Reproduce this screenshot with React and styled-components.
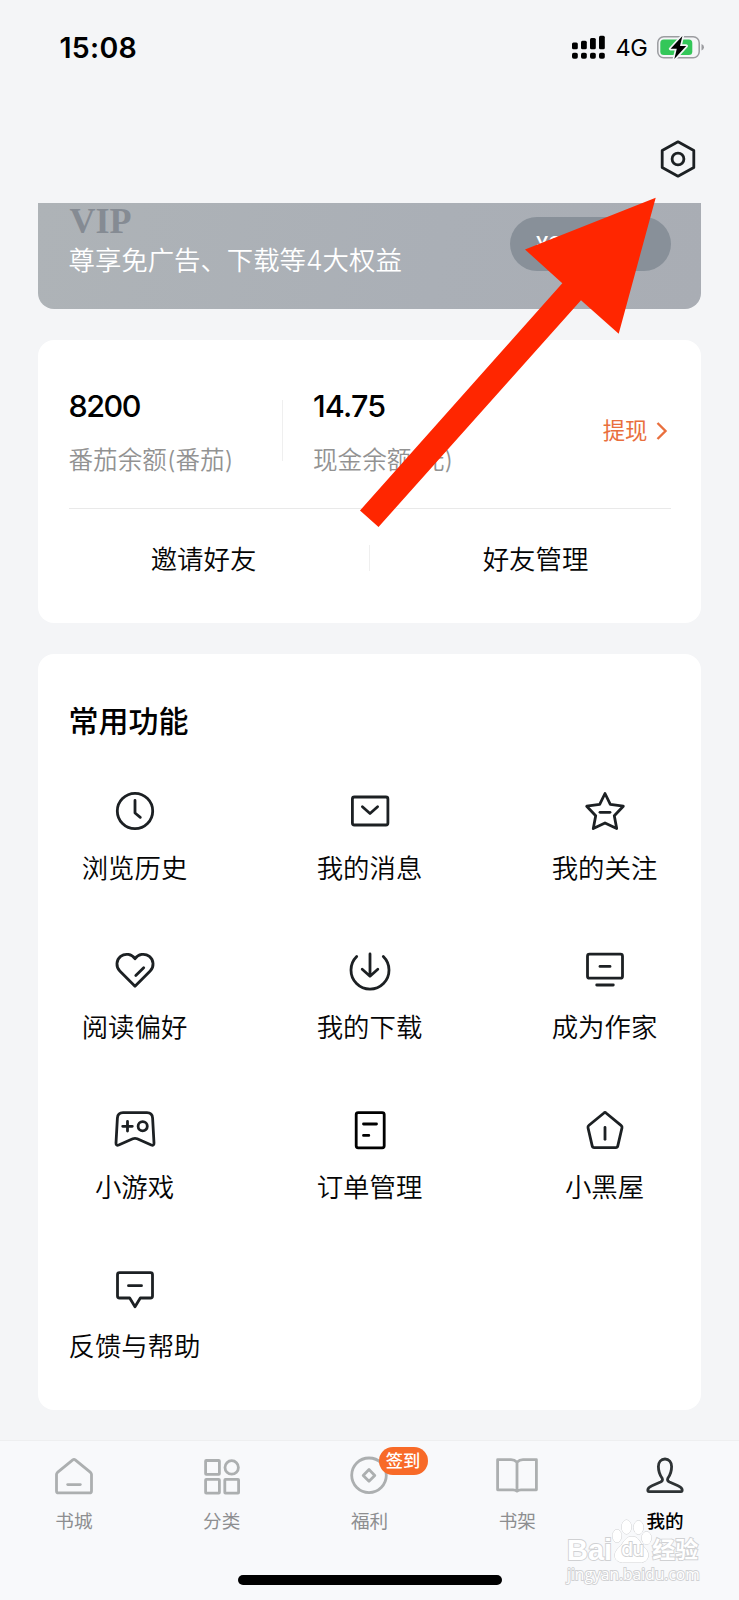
import React from 'react';
import styled, { createGlobalStyle } from 'styled-components';

const GlobalStyle = createGlobalStyle`
  * {
    box-sizing: border-box;
  }

  body {
    margin: 0;
    background: #f4f5f7;
    font-family: Inter, "Noto Sans CJK SC", sans-serif;
  }
`;

const Page = styled.div`
  position: relative;
  display: flex;
  flex-direction: column;
  width: 739px;
  height: 1600px;
  overflow: hidden;
  background: #f4f5f7;
  color: #050505;
`;

const StatusBar = styled.div`
  display: flex;
  align-items: center;
  justify-content: space-between;
  height: 95px;
  padding: 0 35px 0 59.5px;
`;

const Time = styled.span`
  font-size: 28.5px;
  font-weight: 600;
  letter-spacing: 0.3px;
  color: #000;
`;

const StatusIcons = styled.div`
  display: flex;
  align-items: center;
  gap: 9.5px;
`;

const Network = styled.span`
  font-size: 23.5px;
  letter-spacing: -0.3px;
  color: #000;
`;

const Header = styled.div`
  display: flex;
  align-items: center;
  justify-content: flex-end;
  height: 108px;
  padding: 20px 37px 0 0;
`;

const Icon = styled.svg`
  display: block;
  width: 48px;
  height: 48px;
  flex-shrink: 0;
  fill: none;
  stroke: ${props => props.$color || '#1c2023'};
  stroke-width: 2.8;
  stroke-linecap: round;
  stroke-linejoin: round;
`;

const Content = styled.div`
  display: flex;
  flex-direction: column;
  flex: 1;
  padding: 0 38px;
`;

const VipCard = styled.div`
  display: flex;
  justify-content: space-between;
  height: 106px;
  padding: 0 30px 0 30.5px;
  border-radius: 0 0 16px 16px;
  background: linear-gradient(100deg, #aeb3b7, #aaafb6 60%, #a9adb4);
`;

const VipName = styled.div`
  height: 37px;
  padding: 2px 0 0 1px;
  font-family: "Liberation Serif", serif;
  font-size: 36px;
  font-weight: bold;
  line-height: 33px;
  letter-spacing: 0;
  color: #858b93;
`;

const VipText = styled.div`
  font-size: 26.4px;
  font-weight: 350;
  line-height: 40px;
  color: #fff;
`;

const VipButton = styled.div`
  width: 161px;
  height: 54px;
  margin-top: 13.5px;
  padding-left: 26px;
  border-radius: 27px;
  background: #889099;
  color: #fff;
  font-size: 22px;
  font-weight: 500;
  line-height: 54px;
`;

const Card = styled.div`
  display: flex;
  flex-direction: column;
  height: ${props => props.$height}px;
  margin-top: 31px;
  padding: 0 30.5px;
  border-radius: 16px;
  background: #fff;
`;

const Balances = styled.div`
  display: flex;
  align-items: center;
  height: 169px;
  padding-top: 14px;
  border-bottom: 1px solid #e9e9e9;
`;

const Balance = styled.div`
  width: 213.5px;
  padding-top: 2px;
`;

const Amount = styled.div`
  height: 38px;
  font-size: 30.5px;
  font-weight: 500;
  line-height: 38px;
  letter-spacing: ${props => props.$spacing}px;
  color: #000;
`;

const Caption = styled.div`
  margin-top: 17px;
  font-size: 24.6px;
  font-weight: 350;
  line-height: 36px;
  color: #929292;
  white-space: nowrap;
`;

const Separator = styled.div`
  width: 1px;
  height: ${props => props.$height}px;
  margin: 0 ${props => props.$gap || 0}px 2px 0;
  background: #efefef;
`;

const Withdraw = styled.div`
  display: flex;
  align-items: center;
  gap: 8px;
  margin-left: auto;
  padding-right: 3px;
  color: #e96f3d;
  font-size: 22.4px;
  line-height: 30px;
`;

const Friends = styled.div`
  display: flex;
  align-items: center;
  height: 99px;
  margin: 0 -30.5px;
`;

const FriendLink = styled.div`
  flex: 1;
  text-align: center;
  font-size: 26.4px;
  font-weight: 350;
  line-height: 40px;
`;

const Title = styled.div`
  margin-top: 45px;
  font-size: 30px;
  font-weight: 500;
  line-height: 44px;
  color: #000;
`;

const Features = styled.div`
  display: grid;
  grid-template-columns: repeat(3, 132px);
  grid-auto-rows: 159.2px;
  justify-content: space-between;
  margin-top: 44.3px;
`;

const Feature = styled.div`
  display: flex;
  flex-direction: column;
  align-items: center;
`;

const FeatureName = styled.div`
  margin-top: 13px;
  font-size: 26.4px;
  font-weight: 350;
  line-height: 40px;
  white-space: nowrap;
`;

const TabBar = styled.div`
  display: flex;
  flex-direction: column;
  align-items: center;
  height: 160px;
  border-top: 1px solid #eeeff0;
  background: #f8f9fb;
`;

const Tabs = styled.div`
  display: flex;
  width: 100%;
  height: 134px;
`;

const Tab = styled.div`
  position: relative;
  display: flex;
  flex: 1;
  flex-direction: column;
  align-items: center;
  padding-top: 11px;
  font-size: 18.6px;
  font-weight: ${props => (props.$active ? 500 : 400)};
  line-height: 28px;
  color: ${props => (props.$active ? '#000' : '#8d8e90')};
`;

const TabName = styled.span`
  margin-top: 7px;
`;

const Badge = styled.span`
  position: absolute;
  top: 6px;
  left: 83px;
  width: 49px;
  height: 28px;
  border-radius: 14px;
  background: #f86a28;
  color: #fff;
  font-size: 17.3px;
  font-weight: 500;
  line-height: 28px;
  text-align: center;
`;

const HomeIndicator = styled.div`
  width: 264px;
  height: 10px;
  border-radius: 5px;
  background: #000;
`;

const Pointer = styled.svg`
  position: absolute;
  top: 190px;
  left: 350px;
  width: 320px;
  height: 345px;
  fill: #ff2600;
`;

const Watermark = styled.div`
  position: absolute;
  top: 1519px;
  left: 567px;
  width: 134px;
  color: #fff;
  font-weight: 700;
  paint-order: stroke fill;
  -webkit-text-stroke: 1.8px #d0d1d3;
`;

const Brand = styled.div`
  display: flex;
  align-items: flex-end;
  height: 45px;
`;

const BrandText = styled.span`
  font-family: "Liberation Sans", "Noto Sans CJK SC", sans-serif;
  font-size: ${props => props.$size}px;
  line-height: ${props => props.$line}px;
`;

const PawWrapper = styled.span`
  position: relative;
  width: 40px;
  height: 45px;
`;

const PawSvg = styled.svg`
  display: block;
  width: 40px;
  height: 45px;
  fill: #fff;
  stroke: #d0d1d3;
`;

const PawText = styled.span`
  position: absolute;
  top: 20px;
  left: 9px;
  font-size: 19px;
  font-weight: 500;
  line-height: 22px;
  letter-spacing: -0.5px;
`;

const Site = styled.div`
  font-family: "Open Sans", sans-serif;
  font-size: 15.6px;
  font-weight: 400;
  line-height: 21px;
`;

const Dash = ({ y, size = 5 }) => <path d={`M${-size} ${y}H${size}`} />;

const features = [
  {
    name: '浏览历史',
    icon: <><circle r="17.7" /><path d="M0-10.5V2L5.3 6.3" /></>,
  },
  {
    name: '我的消息',
    icon: <><rect x="-17.6" y="-14" width="35.5" height="28" rx="2" /><path d="M-7.6-4.2L0 2.5L7.6-4.2" /></>,
  },
  {
    name: '我的关注',
    icon: <><path d="M0-17.5L5.3-6.7L18.3-4.8L9.3 4.8L11.7 17.6L0 12L-11.7 17.6L-9.3 4.8L-18.3-4.8L-5.3-6.7Z" /><Dash y={1.3} /></>,
  },
  {
    name: '阅读偏好',
    icon: <><path d="M0 16.2L-15.2 1A9.8 9.8 0 1 1 0-11.2A9.8 9.8 0 1 1 15.2 1Z" /><path d="M.8 5.6L8.7-2.3" /></>,
  },
  {
    name: '我的下载',
    icon: <><path d="M-13.3-13.5A19 19 0 1 0 13.3-13.5" /><path d="M0-16V6.2M-7.8-.7L0 6.2L7.8-.7" /></>,
  },
  {
    name: '成为作家',
    icon: <><rect x="-17.5" y="-15.8" width="35" height="24" rx="2" /><Dash y={-3.6} /><Dash y={15} size={8.3} /></>,
  },
  {
    name: '小游戏',
    icon: (
      <>
        <path d="M-12-17.3H12Q17.2-17.3 17.6-12L19 13Q19 16 16.3 15L2.2 8.8Q0 8-2.2 8.8L-16.3 15Q-19 16-19 13L-17.6-12Q-17.2-17.3-12-17.3Z" />
        <path d="M-12.3-3.7H-2.7M-7.5-8.5V1.1" />
        <circle cx="7.7" cy="-3.7" r="4.6" />
      </>
    ),
  },
  {
    name: '订单管理',
    color: '#000',
    icon: <><rect x="-13.8" y="-17.4" width="28" height="35.2" rx="2" /><path d="M-6.5-6H6.5M-6.5 5.4H-1.2" /></>,
  },
  {
    name: '小黑屋',
    icon: <><path d="M-1-17Q0-18 1-17L16-4.7Q17.3-3.6 17-2.2L12.8 15.9Q12.4 17.6 10.8 17.6H-10.8Q-12.4 17.6-12.8 15.9L-17-2.2Q-17.3-3.6-16-4.7Z" /><path d="M0-2.5V9.3" /></>,
  },
  {
    name: '反馈与帮助',
    icon: <><path d="M-15.5-16.3H15.5Q17.5-16.3 17.5-14.3V7Q17.5 9 15.5 9H5.3L0 17.8L-5.3 9H-15.5Q-17.5 9-17.5 7V-14.3Q-17.5-16.3-15.5-16.3Z" /><Dash y={-3.3} size={6.5} /></>,
  },
];

const tabs = [
  {
    name: '书城',
    icon: <><path d="M-1.2-16.2Q0-17.1 1.2-16.2L16.5-3.6Q17.5-2.6 17.5-1.4V14.9Q17.5 16.9 15.5 16.9H-15.5Q-17.5 16.9-17.5 14.9V-1.4Q-17.5-2.6-16.5-3.6Z" /><Dash y={8.6} size={6.3} /></>,
  },
  {
    name: '分类',
    icon: (
      <>
        <rect x="-16.4" y="-15.5" width="13.8" height="13.8" rx=".6" />
        <circle cx="9.7" cy="-8.6" r="6.7" />
        <rect x="-16.4" y="3.4" width="13.8" height="13.8" rx=".6" />
        <rect x="2.8" y="3.4" width="13.8" height="13.8" rx=".6" />
      </>
    ),
  },
  {
    name: '福利',
    badge: '签到',
    icon: <><circle cy="-.7" r="17.3" /><path d="M0-6.4L5.8-.6L0 5.2L-5.8-.6Z" /></>,
  },
  {
    name: '书架',
    icon: <path d="M0-13.8Q-2.5-16.3-6-16.3H-19.4V13.8H-4Q-1.5 13.8 0 15.1Q1.5 13.8 4 13.8H19.4V-16.3H6Q2.5-16.3 0-13.8V15.1" />,
  },
  {
    name: '我的',
    active: true,
    icon: <path d="M-3 2C-5.5-1.5-6.6-5-6.6-9.5C-6.6-14-4-17 0-17C4-17 6.6-14 6.6-9.5C6.6-5 5.5-1.5 3 2C2 4 2.5 5 4.5 6L13 9.7C16 11 17.2 12 17.2 14Q17.2 15.6 16 15.6H-16Q-17.2 15.6-17.2 14C-17.2 12-16 11-13 9.7L-4.5 6C-2.5 5-2 4-3 2Z" />,
  },
];

const Signal = () => (
  <svg width="34" height="26" viewBox="0 0 34 26" fill="#000">
    <rect x="0" y="7.5" width="5.8" height="6.8" rx="1.5" />
    <rect x="9" y="5.8" width="5.8" height="8.5" rx="1.5" />
    <rect x="18" y="3" width="5.8" height="11.3" rx="1.5" />
    <rect x="27" y="0.8" width="5.8" height="13.5" rx="1.5" />
    {[0, 9, 18, 27].map(x => <rect key={x} x={x} y="17.8" width="5.8" height="6" rx="1.8" />)}
  </svg>
);

const Battery = () => (
  <svg width="47" height="26" viewBox="0 0 47 26">
    <rect x="0.8" y="1.8" width="41.4" height="21" rx="6" fill="none" stroke="#9b9ca0" strokeWidth="1.5" />
    <path d="M44.5 9V15.5Q47 14.5 47 12.2Q47 10 44.5 9Z" fill="#9b9ca0" />
    <rect x="3.3" y="4.5" width="32" height="15.6" rx="3.5" fill="#33c759" />
    <path d="M25.4 1L13.6 13.8H19.8L17.3 24L29.2 11H23Z" fill="#000" stroke="#f4f5f7" strokeWidth="3.4" strokeLinejoin="round" paintOrder="stroke" />
  </svg>
);

const Paw = () => (
  <PawWrapper>
    <PawSvg viewBox="0 0 40 45">
      <ellipse cx="5" cy="17" rx="4.5" ry="6.5" />
      <ellipse cx="14.5" cy="8" rx="4.8" ry="7" />
      <ellipse cx="26.5" cy="8.5" rx="4.8" ry="6.8" />
      <ellipse cx="34.5" cy="19" rx="4.8" ry="6.3" />
      <path d="M20 17.5C27 17.5 27 23 32 28C39 34 37 43.5 28 43.5H12C2 43.5 0 35 7 28.5C12 24 13 17.5 20 17.5Z" />
    </PawSvg>
    <PawText>du</PawText>
  </PawWrapper>
);

export default () => {
  var featureElements = features.map((feature) => (
    <Feature key={feature.name}>
      <Icon viewBox="-24 -24 48 48" $color={feature.color}>{feature.icon}</Icon>
      <FeatureName>{feature.name}</FeatureName>
    </Feature>
  ));

  var tabElements = tabs.map((tab) => (
    <Tab key={tab.name} $active={tab.active}>
      <Icon viewBox="-24 -24 48 48" $color={tab.active ? '#2e3335' : '#acafb0'}>{tab.icon}</Icon>
      <TabName>{tab.name}</TabName>
      {tab.badge && <Badge>{tab.badge}</Badge>}
    </Tab>
  ));

  return (
    <Page>
      <GlobalStyle />
      <StatusBar>
        <Time>15:08</Time>
        <StatusIcons>
          <Signal />
          <Network>4G</Network>
          <Battery />
        </StatusIcons>
      </StatusBar>
      <Header>
        <Icon viewBox="-24 -24 48 48">
          <path d="M0-17.2L15.8-8.6V8.6L0 17.2L-15.8 8.6V-8.6Z" />
          <circle r="5.9" />
        </Icon>
      </Header>
      <Content>
        <VipCard>
          <div>
            <VipName>VIP</VipName>
            <VipText>尊享免广告、下载等4大权益</VipText>
          </div>
          <VipButton>¥9</VipButton>
        </VipCard>
        <Card $height={283}>
          <Balances>
            <Balance>
              <Amount $spacing={-1.5}>8200</Amount>
              <Caption>番茄余额(番茄)</Caption>
            </Balance>
            <Separator $height={61} $gap={30} />
            <Balance>
              <Amount $spacing={-0.8}>14.75</Amount>
              <Caption>现金余额(元)</Caption>
            </Balance>
            <Withdraw>
              提现
              <svg width="12" height="20" viewBox="0 0 12 20" fill="none" stroke="currentColor" strokeWidth="2.4">
                <path d="M1.5 2L9.5 10L1.5 18" />
              </svg>
            </Withdraw>
          </Balances>
          <Friends>
            <FriendLink>邀请好友</FriendLink>
            <Separator $height={26} />
            <FriendLink>好友管理</FriendLink>
          </Friends>
        </Card>
        <Card $height={756}>
          <Title>常用功能</Title>
          <Features>{featureElements}</Features>
        </Card>
      </Content>
      <TabBar>
        <Tabs>{tabElements}</Tabs>
        <HomeIndicator />
      </TabBar>
      <Pointer viewBox="350 190 320 345">
        <path d="M655.7 197.7L525 249.5L562.3 283.3L360 510.5L378.5 527L581 300.3L618.7 333.7Z" />
      </Pointer>
      <Watermark>
        <Brand>
          <BrandText $size={29} $line={27}>Bai</BrandText>
          <Paw />
          <BrandText $size={23} $line={28}>经验</BrandText>
        </Brand>
        <Site>jingyan.baidu.com</Site>
      </Watermark>
    </Page>
  );
}
